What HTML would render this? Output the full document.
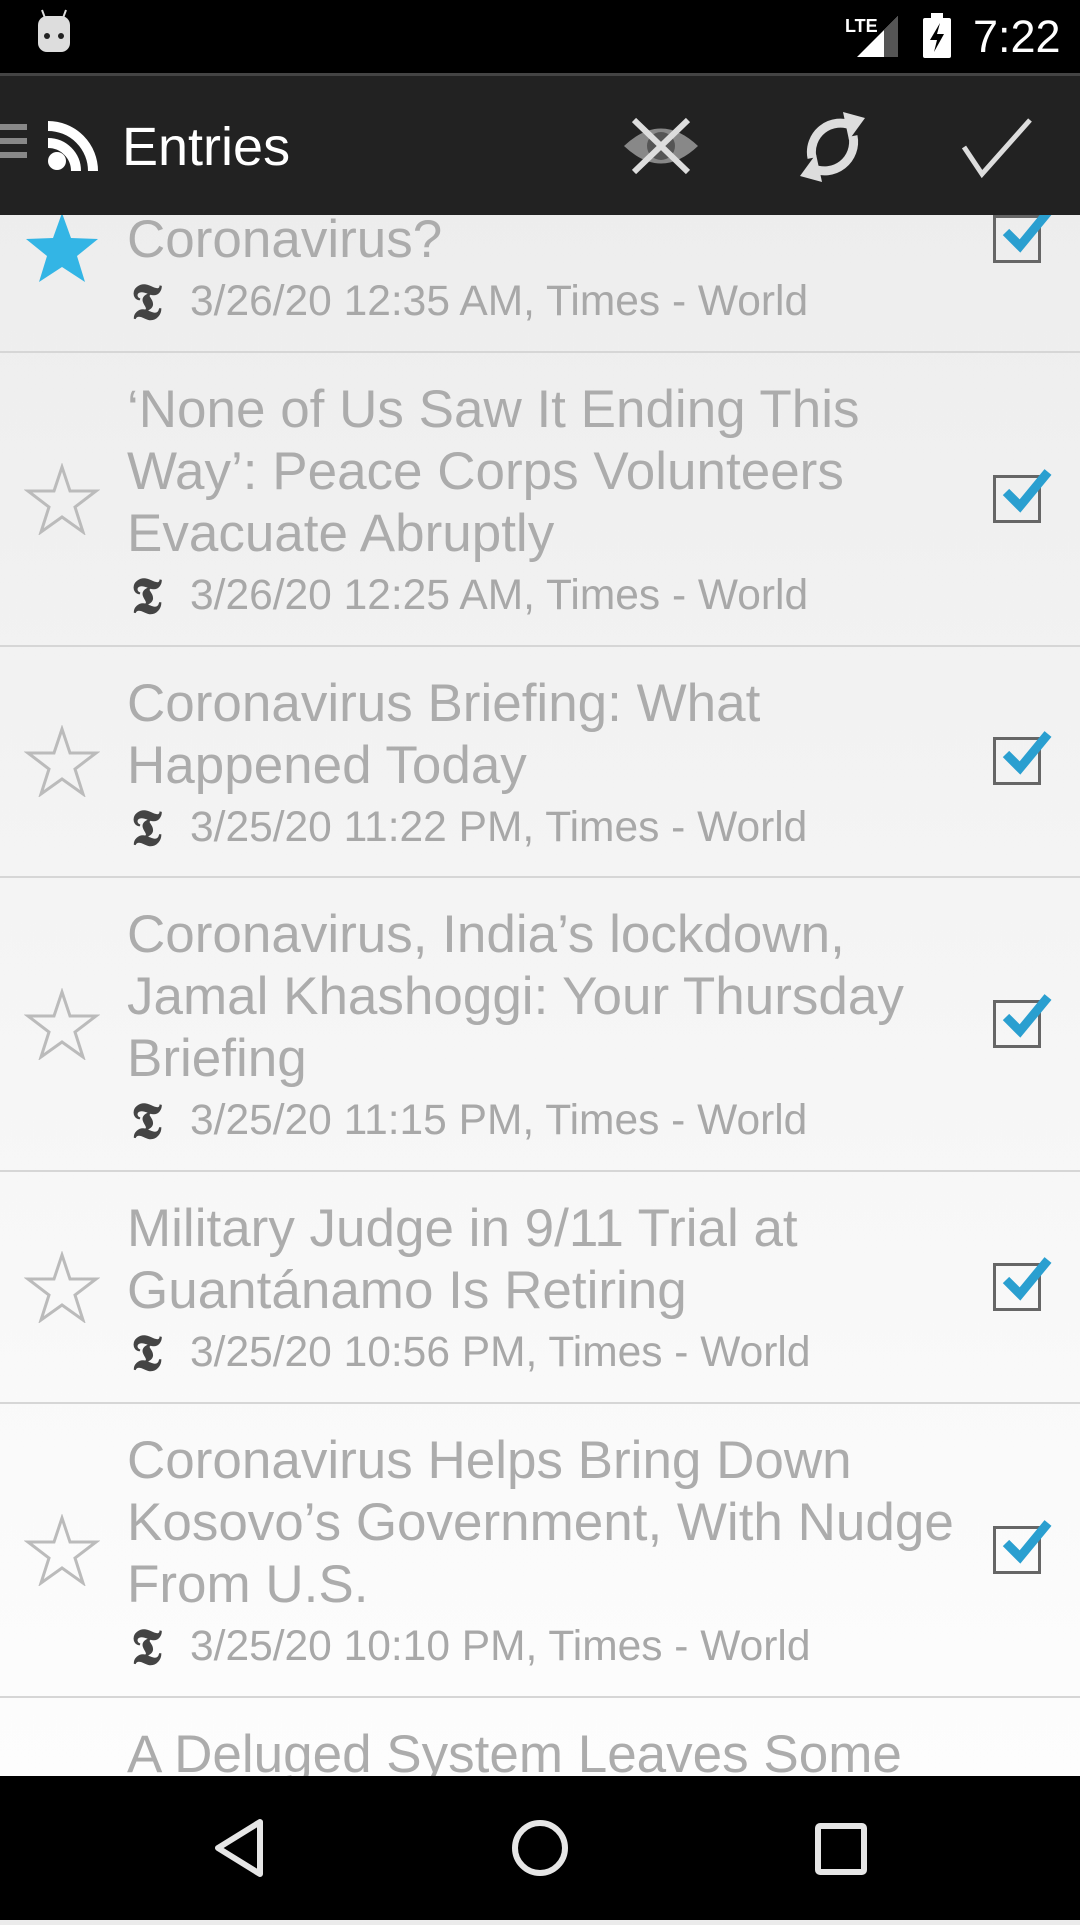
<!DOCTYPE html>
<html><head><meta charset="utf-8"><style>
*{margin:0;padding:0;box-sizing:border-box}
body{width:1080px;height:1920px;overflow:hidden;position:relative;font-family:"Liberation Sans",Roboto,sans-serif;background:linear-gradient(#ebebeb,#fdfdfd 1776px)}
#status{position:absolute;left:0;top:0;width:1080px;height:73px;background:#000;z-index:5}
#sline{position:absolute;left:0;top:73px;width:1080px;height:3px;background:#444;z-index:5}
#bar{position:absolute;left:0;top:76px;width:1080px;height:139px;background:#222;z-index:5}
#list{position:absolute;left:0;top:183px;width:1080px}
.row{position:relative;padding:26px 100px 18.8px 127px;border-bottom:2px solid #d6d6d6}
.t{font-size:53px;line-height:62px;color:#acacac;white-space:nowrap}
.m{font-size:42.5px;line-height:61px;color:#a8a8a8;padding-left:63px;position:relative;white-space:nowrap}
.m .T{position:absolute;left:4px;top:6px;font-family:"Liberation Serif",serif;font-weight:bold;font-size:50px;line-height:50px;color:#444}
.star{position:absolute;left:24px;top:50%;margin-top:-36px;width:76px;height:72px}
.cb{position:absolute;left:993px;top:50%;margin-top:-24px;width:48px;height:48px;border:3px solid #666}
.cb svg{position:absolute;left:0;top:-22px;overflow:visible}
#nav{position:absolute;left:0;top:1776px;width:1080px;height:144px;background:#000;z-index:5}
</style></head><body>
<div id="status">
<svg width="1080" height="73" style="position:absolute;left:0;top:0">
<rect x="38" y="16" width="32" height="36" rx="9" fill="#ddd"/>
<line x1="42" y1="10" x2="45" y2="18" stroke="#ddd" stroke-width="2"/><line x1="66" y1="10" x2="63" y2="18" stroke="#ddd" stroke-width="2"/>
<circle cx="47" cy="36" r="3" fill="#222"/><circle cx="61" cy="36" r="3" fill="#222"/>
<text x="845" y="32" fill="#fff" font-size="18" font-family="Liberation Sans Narrow,Liberation Sans" font-weight="bold">LTE</text>
<polygon points="898,16 898,57 857,57" fill="#fff"/><polygon points="898,16 898,57 884,57 884,30" fill="#555"/>
<rect x="923" y="18" width="28" height="40" rx="2" fill="#fff"/><rect x="931" y="13" width="12" height="6" fill="#fff"/>
<polygon points="940,23 930,40 937,40 934,52 944,34 937,34" fill="#000"/>
<text x="973" y="52" fill="#fff" font-size="45">7:22</text>
</svg></div>
<div id="sline"></div>
<div id="bar">
<svg width="1080" height="139" style="position:absolute;left:0;top:0">
<rect x="0" y="48" width="27" height="6" fill="#888"/><rect x="0" y="62" width="27" height="6" fill="#888"/><rect x="0" y="76" width="27" height="6" fill="#888"/>
<circle cx="57" cy="85" r="9" fill="#fff"/>
<path d="M48 67 A28 28 0 0 1 76 95" stroke="#fff" stroke-width="10" fill="none"/>
<path d="M48 50 A45 45 0 0 1 93 95" stroke="#fff" stroke-width="10" fill="none"/>
<text x="122" y="89" fill="#fff" font-size="54">Entries</text>
<path d="M624 70 Q661 35 698 70 Q661 105 624 70Z" fill="#888"/><circle cx="661" cy="70" r="14" fill="#555"/>
<line x1="634" y1="44" x2="688" y2="96" stroke="#ddd" stroke-width="6"/><line x1="688" y1="44" x2="634" y2="96" stroke="#ddd" stroke-width="6"/>
<path d="M812 82 A29 29 0 0 1 853 50" stroke="#ddd" stroke-width="9" fill="none"/><polygon points="843,36 849,64 865,42" fill="#ddd"/>
<path d="M853 60 A29 29 0 0 1 812 92" stroke="#ddd" stroke-width="9" fill="none"/><polygon points="822,106 816,78 800,100" fill="#ddd"/>
<polyline points="964,71 982,98 1030,44" stroke="#ddd" stroke-width="5" fill="none"/>
</svg></div>

<div id="list">
<div class="row"><svg class="star" viewBox="0 0 76 72" style="margin-top:-56px"><polygon points="38,2 47,27 74,28 53,45 61,71 38,56 15,71 23,45 2,28 29,27" fill="#33b5e5"/></svg>
<div class="t">Coronavirus?</div><div class="m"><span class="T">𝕿</span>3/26/20 12:35 AM, Times - World</div>
<div class="cb" style="margin-top:-52px;"><svg width="60" height="60"><polyline points="10,36 24,50 52,16" stroke="#2a9fd0" stroke-width="9" fill="none"/></svg></div></div>

<div class="row"><svg class="star" viewBox="0 0 76 72"><polygon points="38,4 46,28 72,28 51,44 59,69 38,54 17,69 25,44 4,28 30,28" fill="none" stroke="#bbb" stroke-width="3"/></svg>
<div class="t">‘None of Us Saw It Ending This<br>Way’: Peace Corps Volunteers<br>Evacuate Abruptly</div><div class="m"><span class="T">𝕿</span>3/26/20 12:25 AM, Times - World</div>
<div class="cb"><svg width="60" height="60"><polyline points="10,36 24,50 52,16" stroke="#2a9fd0" stroke-width="9" fill="none"/></svg></div></div>

<div class="row"><svg class="star" viewBox="0 0 76 72"><polygon points="38,4 46,28 72,28 51,44 59,69 38,54 17,69 25,44 4,28 30,28" fill="none" stroke="#bbb" stroke-width="3"/></svg>
<div class="t">Coronavirus Briefing: What<br>Happened Today</div><div class="m"><span class="T">𝕿</span>3/25/20 11:22 PM, Times - World</div>
<div class="cb"><svg width="60" height="60"><polyline points="10,36 24,50 52,16" stroke="#2a9fd0" stroke-width="9" fill="none"/></svg></div></div>

<div class="row"><svg class="star" viewBox="0 0 76 72"><polygon points="38,4 46,28 72,28 51,44 59,69 38,54 17,69 25,44 4,28 30,28" fill="none" stroke="#bbb" stroke-width="3"/></svg>
<div class="t">Coronavirus, India’s lockdown,<br>Jamal Khashoggi: Your Thursday<br>Briefing</div><div class="m"><span class="T">𝕿</span>3/25/20 11:15 PM, Times - World</div>
<div class="cb"><svg width="60" height="60"><polyline points="10,36 24,50 52,16" stroke="#2a9fd0" stroke-width="9" fill="none"/></svg></div></div>

<div class="row"><svg class="star" viewBox="0 0 76 72"><polygon points="38,4 46,28 72,28 51,44 59,69 38,54 17,69 25,44 4,28 30,28" fill="none" stroke="#bbb" stroke-width="3"/></svg>
<div class="t">Military Judge in 9/11 Trial at<br>Guantánamo Is Retiring</div><div class="m"><span class="T">𝕿</span>3/25/20 10:56 PM, Times - World</div>
<div class="cb"><svg width="60" height="60"><polyline points="10,36 24,50 52,16" stroke="#2a9fd0" stroke-width="9" fill="none"/></svg></div></div>

<div class="row"><svg class="star" viewBox="0 0 76 72"><polygon points="38,4 46,28 72,28 51,44 59,69 38,54 17,69 25,44 4,28 30,28" fill="none" stroke="#bbb" stroke-width="3"/></svg>
<div class="t">Coronavirus Helps Bring Down<br>Kosovo’s Government, With Nudge<br>From U.S.</div><div class="m"><span class="T">𝕿</span>3/25/20 10:10 PM, Times - World</div>
<div class="cb"><svg width="60" height="60"><polyline points="10,36 24,50 52,16" stroke="#2a9fd0" stroke-width="9" fill="none"/></svg></div></div>

<div class="row" style="border:none"><div class="t">A Deluged System Leaves Some</div></div>
</div>

<div id="nav"><svg width="1080" height="144">
<polygon points="260,46 260,98 218,72" fill="none" stroke="#e6e6e6" stroke-width="6" stroke-linejoin="round"/>
<circle cx="540" cy="72" r="25" fill="none" stroke="#e6e6e6" stroke-width="6"/>
<rect x="818" y="50" width="46" height="46" rx="2" fill="none" stroke="#e6e6e6" stroke-width="6"/>
</svg></div>
</body></html>
